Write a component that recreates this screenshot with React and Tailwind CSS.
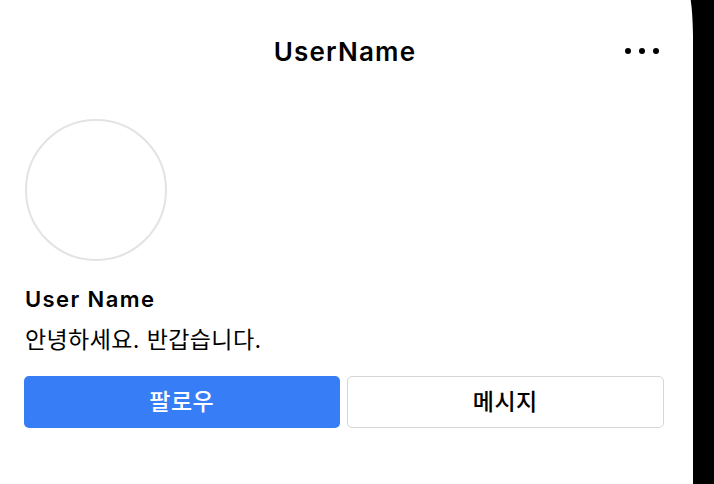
export default function App() {
  return (
    <div className="flex h-[484px] w-[714px] overflow-hidden bg-black" style={{ fontFamily: "Inter, 'Noto Sans CJK KR', sans-serif" }}>
      <div className="flex h-full w-[690px] flex-col bg-white text-black">
        <header className="relative flex h-[102px] items-center justify-center">
          <h1 className="text-[26px] font-semibold tracking-[1.2px]">UserName</h1>
          <button className="absolute right-[31px] top-[48px] flex gap-[8px]">
            <span className="h-[6px] w-[6px] rounded-full bg-black" />
            <span className="h-[6px] w-[6px] rounded-full bg-black" />
            <span className="h-[6px] w-[6px] rounded-full bg-black" />
          </button>
        </header>
        <section className="flex flex-col px-[24px] pr-[26px]">
          <div className="mt-[17px] ml-[1px] h-[142px] w-[142px] rounded-full border-2 border-[#e3e3e3]" />
          <div className="mt-[24px] ml-[1px] text-[22px] font-semibold leading-[28px] tracking-[1.4px]">User Name</div>
          <div className="mt-[12px] ml-[1px] text-[23px] leading-[30px] tracking-[0.4px]">안녕하세요. 반갑습니다.</div>
          <div className="mt-[21px] flex gap-[7px]">
            <button className="flex h-[52px] flex-1 items-center justify-center rounded-[5px] bg-[#377df6] text-[23px] font-medium tracking-[0.5px] text-white">팔로우</button>
            <button className="flex h-[52px] flex-1 items-center justify-center rounded-[5px] border border-[#d6d6d6] bg-white text-[23px] font-medium tracking-[0.5px] text-black">메시지</button>
          </div>
        </section>
      </div>
      <svg className="h-full w-[3px] shrink-0" viewBox="0 0 3 484" preserveAspectRatio="none">
        <path d="M0 0 L0.7 0 Q 2.6 12 3 36 L3 484 L0 484 Z" fill="white" />
      </svg>
    </div>
  );
}
